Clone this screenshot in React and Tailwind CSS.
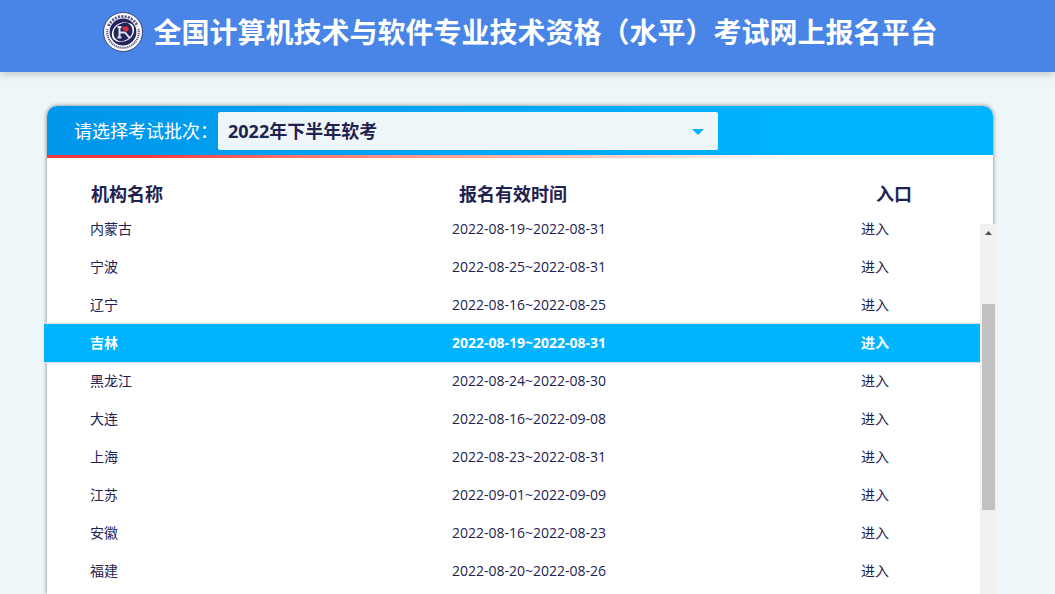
import React, { useState } from "react";

const organizations = [
  { name: "内蒙古", period: "2022-08-19~2022-08-31" },
  { name: "宁波", period: "2022-08-25~2022-08-31" },
  { name: "辽宁", period: "2022-08-16~2022-08-25" },
  { name: "吉林", period: "2022-08-19~2022-08-31" },
  { name: "黑龙江", period: "2022-08-24~2022-08-30" },
  { name: "大连", period: "2022-08-16~2022-09-08" },
  { name: "上海", period: "2022-08-23~2022-08-31" },
  { name: "江苏", period: "2022-09-01~2022-09-09" },
  { name: "安徽", period: "2022-08-16~2022-08-23" },
  { name: "福建", period: "2022-08-20~2022-08-26" },
];

function Logo() {
  return (
    <svg viewBox="0 0 40 40" className="size-10 shrink-0" aria-hidden="true">
      <circle cx="20" cy="20" r="19.5" fill="#fff" stroke="#2a2b62" strokeWidth="0.8" />
      {/* ring lettering: large marks on top, small ones round the bottom */}
      <path d="M5.500 14A15.800 15.800 0 0 1 34.500 14" fill="none" stroke="#2a2b62" strokeWidth="2.800" strokeDasharray="2.200 1.100" opacity="0.75" />
      <path d="M4.500 17A15.800 15.800 0 1 0 35.500 17" fill="none" stroke="#2a2b62" strokeWidth="2" strokeDasharray="1.300 0.700" opacity="0.75" />
      <circle cx="20" cy="20" r="13.4" fill="#23245a" />
      {/* two swooshes */}
      <path d="M9.500 26C6.500 17 14.500 8.500 26 10.500c-9-.4-15.500 4.500-15.500 10.500 0 5 4 8.500 9 9-4.500.4-8-.8-10-4Z" fill="#fff" />
      <path d="M30.500 14c3 9-5 17.500-16 15.500 8.500.4 15-4.500 15-10.500 0-4-2-6.500-5-8 2.700 0 4.800 1 6 3Z" fill="#fff" />
      <path d="M14.500 15h4M16.500 15v10.500M14.500 25.500h4M17 20.500h4.500c2 0 3 5 5.500 5" fill="none" stroke="#dfe2ef" strokeWidth="2" />
      <path d="m20 14 2 1.200 2-1.700.6 2.200 1.700 1-2.500 3-2.800-1-1.500-1.700Z" fill="#e5303c" />
    </svg>
  );
}

function BatchSelect() {
  const [batch, setBatch] = useState("2022-2");

  return (
    <div className="flex h-[49px] shrink-0 items-center rounded-t-[10px] bg-linear-to-r from-[#0096eb] to-[#00b4ff] to-80% pl-[27px]">
      <label htmlFor="batch" className="w-36 shrink-0 text-lg whitespace-nowrap text-white">
        请选择考试批次：
      </label>
      <div className="relative w-[500px]">
        <select
          id="batch"
          value={batch}
          onChange={(e) => setBatch(e.target.value)}
          className="h-[38px] w-full appearance-none rounded-xs bg-[#eef6f9] px-2.5 text-lg font-bold text-[#222250] outline-none"
        >
          <option value="2022-2">2022年下半年软考</option>
        </select>
        <svg viewBox="0 0 12 6" className="pointer-events-none absolute top-[17px] right-3.5 h-1.5 w-3" aria-hidden="true">
          <path d="M0 0h12L6 6Z" fill="#00b4ff" />
        </svg>
      </div>
    </div>
  );
}

function Row({ item, active }) {
  return (
    <tr className={active ? "h-[38px] bg-[#00b4ff] font-bold text-white shadow-[0_0_1px_1px_#d9dfe3]" : "h-[38px]"}>
      <td className="p-0 pl-[46px]">{item.name}</td>
      <td className="p-0">{item.period}</td>
      <td className="p-0">
        <a href="#enter">进入</a>
      </td>
    </tr>
  );
}

export default function App() {
  return (
    <div className="flex h-screen flex-col overflow-hidden bg-[#eef6f9] font-['Open_Sans','Noto_Sans_CJK_SC',sans-serif] text-[#222250]">
      <header className="flex h-[72px] shrink-0 items-center justify-center gap-2.5 bg-[#4985e6] pr-3.5 pb-2 shadow-[0_2px_8px_rgba(0,0,0,0.2)]">
        <Logo />
        <h1 className="text-[28px] leading-10 font-bold whitespace-nowrap text-white">
          全国计算机技术与软件专业技术资格（水平）考试网上报名平台
        </h1>
      </header>

      <main className="mt-[34px] mr-[62px] ml-[47px] flex min-h-0 flex-1 flex-col rounded-t-[10px] bg-white shadow-[0_0_4px_rgba(0,0,0,0.5)]">
        <BatchSelect />
        <div className="h-[3px] shrink-0 bg-linear-to-r from-[#f5333f] from-10% to-white to-80%" />

        <table className="mt-5 w-full table-fixed text-left text-lg">
          <thead>
            <tr className="h-8">
              <th className="w-[412px] p-0 pl-11">机构名称</th>
              <th className="p-0">报名有效时间</th>
              <th className="w-[117px] p-0">入口</th>
            </tr>
          </thead>
        </table>

        <div className="-mr-1 -ml-[3px] flex min-h-0 flex-1 overflow-hidden">
          <div className="min-w-0 flex-1">
            <table className="w-full table-fixed text-sm">
              <colgroup>
                <col className="w-[408px]" />
                <col />
                <col className="w-[119px]" />
              </colgroup>
              <tbody>
                {organizations.map((item) => (
                  <Row key={item.name} item={item} active={item.name === "吉林"} />
                ))}
              </tbody>
            </table>
          </div>
          <div className="mt-3.5 flex w-[17px] shrink-0 flex-col items-center bg-[#f1f1f1]">
            <svg viewBox="0 0 7 4" className="mt-[7px] h-1 w-[7px]" aria-hidden="true">
              <path d="M0 4 3.500 0 7 4Z" fill="#505050" />
            </svg>
            <div className="mt-[69px] h-[206px] w-[13px] bg-[#c1c1c1]" />
          </div>
        </div>
      </main>
    </div>
  );
}
